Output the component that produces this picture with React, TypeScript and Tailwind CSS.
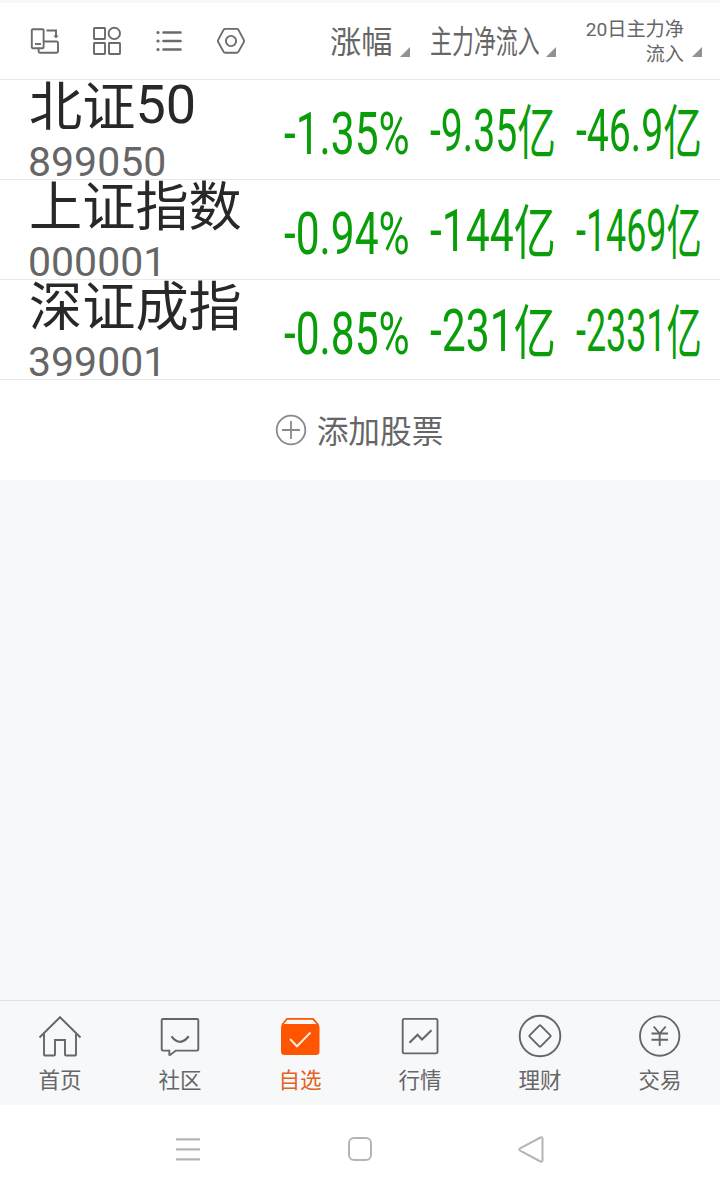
import React, { useLayoutEffect, useRef, useState } from "react";

const stocks = [
  { name: "北证50", code: "899050", change: "-1.35%", inflow: "-9.35亿", inflow20: "-46.9亿" },
  { name: "上证指数", code: "000001", change: "-0.94%", inflow: "-144亿", inflow20: "-1469亿" },
  { name: "深证成指", code: "399001", change: "-0.85%", inflow: "-231亿", inflow20: "-2331亿" },
];

// Chinese glyphs sit a little below the Roboto baseline
const MixedText = ({ text }: { text: string }) => (
  <>
    {text.split(/([\u4e00-\u9fff]+)/).filter(Boolean).map((part, i) =>
      /[\u4e00-\u9fff]/.test(part) ? (
        <span key={i} className="relative top-[0.05em] text-[0.985em]">{part}</span>
      ) : (
        <span key={i}>{part}</span>
      )
    )}
  </>
);

// Squeezes a single line of text horizontally so it fills its box
const FitText = ({ text, className }: { text: string; className: string }) => {
  const box = useRef<HTMLDivElement>(null);
  const label = useRef<HTMLSpanElement>(null);
  const [scale, setScale] = useState(1);

  useLayoutEffect(() => {
    if (box.current && label.current) {
      setScale(box.current.clientWidth / label.current.offsetWidth);
    }
  }, [text]);

  return (
    <div ref={box} className={`shrink-0 ${className}`}>
      <span
        ref={label}
        className="inline-block origin-left whitespace-nowrap"
        style={{ transform: `scaleX(${scale})` }}
      >
        <MixedText text={text} />
      </span>
    </div>
  );
};

const SortMark = () => (
  <svg width="10" height="10" viewBox="0 0 10 10" className="mb-0.5 shrink-0">
    <path d="M10 0v10H0z" fill="#919196" />
  </svg>
);

const Toolbar = () => (
  <div className="flex items-center gap-8 pl-[30px] text-[#6b6b6b]">
    <svg width="30" height="30" viewBox="0 0 30 30" fill="none" stroke="currentColor" strokeWidth="1.9">
      <rect x="1.8" y="3.2" width="11.8" height="19" rx="1" />
      <path d="M5 18h6" />
      <path d="M16.5 4.5H26v7" />
      <path d="M23.3 9.5 26 12.3l2.7-2.8z" fill="currentColor" stroke="none" />
      <path d="M14 15.5h12.6a1.4 1.4 0 0 1 1.4 1.4v8.4a1.4 1.4 0 0 1-1.4 1.4H10a1.4 1.4 0 0 1-1.4-1.4v-3" />
    </svg>
    <svg width="30" height="30" viewBox="0 0 30 30" fill="none" stroke="currentColor" strokeWidth="1.9">
      <rect x="2" y="2" width="11" height="11" rx=".5" />
      <circle cx="22.3" cy="7.4" r="5.7" />
      <rect x="2" y="17" width="11" height="11" rx=".5" />
      <rect x="17" y="17" width="11" height="11" rx=".5" />
    </svg>
    <svg width="30" height="30" viewBox="0 0 30 30" stroke="currentColor" strokeWidth="2.6" strokeLinecap="round">
      <path d="M9.5 6.5h17M9.5 15h17M9.5 23.5h17" />
      <path d="M3.9 6.5h.2M3.9 15h.2M3.9 23.5h.2" strokeWidth="3" />
    </svg>
    <svg width="30" height="30" viewBox="0 0 30 30" fill="none" stroke="currentColor" strokeWidth="1.9">
      <path d="M9.3 2.9h11.4q1.2 0 1.8 1l5.3 10q.6 1.1 0 2.2l-5.3 9.5q-.6 1.2-1.8 1.2H9.3q-1.2 0-1.8-1.2L2.2 16.1q-.6-1.1 0-2.2l5.3-10q.6-1 1.8-1z" />
      <circle cx="15" cy="15" r="5.1" />
    </svg>
  </div>
);

const TableHeader = () => (
  <header className="flex h-[80px] shrink-0 items-center justify-between border-t-[3px] border-b border-t-[#f6f7f8] border-b-[#e9e9e9] bg-white pr-[18px] text-[#666]">
    <Toolbar />
    <div className="flex h-[36px] items-end">
      <div className="flex w-[80px] items-end justify-between">
        <div className="-mb-[1px] text-[31.7px] leading-[38px]">
          <MixedText text="涨幅" />
        </div>
        <SortMark />
      </div>
      <div className="ml-5 flex w-[126px] items-end justify-between">
        <FitText text="主力净流入" className="-mb-px w-[110px] text-[32px] leading-[38px]" />
        <SortMark />
      </div>
      <div className="ml-5 flex w-[126px] items-end justify-end gap-2">
        <div className="-mb-[8px] text-right text-[19.2px] leading-[25px] whitespace-nowrap">
          20日主力净
          <br />
          流入
        </div>
        <SortMark />
      </div>
    </div>
  </header>
);

const StockRow = ({ stock }: { stock: (typeof stocks)[number] }) => (
  <div className="flex h-[100px] shrink-0 items-center border-b border-[#e9e9e9] bg-white pr-[18px] pl-[29px]">
    <div className="w-[255px] shrink-0">
      <div className="h-[65px] text-[54px] leading-[50px] whitespace-nowrap text-[#282828]">
        <MixedText text={stock.name} />
      </div>
      <div className="-ml-px h-[34px] text-[41px] leading-[35px] text-[#666]">{stock.code}</div>
    </div>
    <div className="flex items-center gap-5 text-[60px] leading-[70px] text-[#0a9d0a]">
      <FitText text={stock.change} className="w-[126px] pt-[8px]" />
      <FitText text={stock.inflow} className="w-[126px] pt-[3px]" />
      <FitText text={stock.inflow20} className="w-[126px] pt-[3px]" />
    </div>
  </div>
);

const AddStock = () => (
  <div className="flex h-[100px] shrink-0 items-center justify-center gap-[10px] bg-white pr-[2px] text-[#666]">
    <svg width="32" height="32" viewBox="0 0 32 32" fill="none" stroke="#8a8a8e" strokeWidth="1.8">
      <circle cx="16" cy="16" r="14.3" />
      <path d="M16 7v18M7 16h18" />
    </svg>
    <span className="pt-[6px] text-[31.7px] leading-[40px]">添加股票</span>
  </div>
);

const tabs = [
  {
    label: "首页",
    icon: (
      <>
        <path d="M3.5 23.5 24 3.2l20.5 20.3" />
        <path d="M8 20v20.5q0 1 1 1h9q1 0 1-1V26h10v14.5q0 1 1 1h9q1 0 1-1V20" />
      </>
    ),
  },
  {
    label: "社区",
    icon: (
      <>
        <path d="M7 5h34q1.3 0 1.3 1.3v29q0 1.3-1.3 1.3H20l-6 4.3q-.6.4-.7-.3v-4H7q-1.3 0-1.3-1.3v-29Q5.7 5 7 5z" />
        <path d="M15.5 22.3q8.5 11 17.2 0" strokeWidth="2.2" />
      </>
    ),
  },
  {
    label: "自选",
    active: true,
    icon: (
      <>
        <path d="M6 11 11 4.8h26L42.5 11" strokeWidth="1.8" />
        <rect x="5" y="10" width="38.5" height="31" rx="3.5" fill="currentColor" stroke="none" />
        <path d="m14 25 7 7.3 13.5-13.8" stroke="#ffe9dc" strokeWidth="2" />
      </>
    ),
  },
  {
    label: "行情",
    icon: (
      <>
        <rect x="6.7" y="4.9" width="34.8" height="34.5" rx="1.5" />
        <path d="m13.5 28.7 8-8 4.5 4.8 9.5-9.3" strokeWidth="2.1" />
      </>
    ),
  },
  {
    label: "理财",
    icon: (
      <>
        <circle cx="24" cy="22" r="20.3" />
        <path d="M23.3 11.6q.7-.7 1.4 0l9.7 9.7q.7.7 0 1.4l-9.7 9.7q-.7.7-1.4 0l-9.7-9.7q-.7-.7 0-1.4z" />
      </>
    ),
  },
  {
    label: "交易",
    icon: (
      <>
        <circle cx="23.7" cy="22" r="19.7" />
        <path d="m17.7 12.5 6 7 6-7M15.5 19.5H32M15.5 25.7H32M23.7 19.5V32" />
      </>
    ),
  },
];

const TabBar = () => (
  <nav className="grid h-[105px] shrink-0 grid-cols-6 border-t border-[#e2e3e5]">
    {tabs.map((tab) => (
      <div
        key={tab.label}
        className={`flex flex-col items-center pt-[13px] ${tab.active ? "text-[#ff5500]" : "text-[#666]"}`}
      >
        <svg width="48" height="48" viewBox="0 0 48 48" fill="none" stroke="currentColor" strokeWidth="1.9">
          {tab.icon}
        </svg>
        <span className={`mt-[5px] text-[21.5px] leading-[28px] ${tab.active ? "text-[#e2621f]" : ""}`}>{tab.label}</span>
      </div>
    ))}
  </nav>
);

const SystemNav = () => (
  <div className="flex h-[88px] shrink-0 items-center justify-between bg-white px-[172px] text-[#b5b5b5]">
    <svg width="32" height="32" viewBox="0 0 32 32" stroke="currentColor" strokeWidth="2.3">
      <path d="M4 6.3h24M4 16.3h24M4 26.3h24" />
    </svg>
    <svg width="32" height="32" viewBox="0 0 32 32" fill="none" stroke="currentColor" strokeWidth="2">
      <rect x="5" y="5" width="22" height="22" rx="5" />
    </svg>
    <svg width="32" height="32" viewBox="0 0 32 32" fill="none" stroke="currentColor" strokeWidth="2" strokeLinejoin="round">
      <path d="M24.5 4.5q2-.8 2 1.500v21q0 2.300-2 1.500L4.500 17.800q-2.300-1.300 0-2.700z" />
    </svg>
  </div>
);

const App = () => {
  return (
    <div className="flex h-[1193px] w-[720px] flex-col overflow-hidden bg-[#f7f8fa] font-['Roboto','Noto_Sans_CJK_SC',sans-serif]">
      <TableHeader />
      {stocks.map((stock) => (
        <StockRow key={stock.code} stock={stock} />
      ))}
      <AddStock />
      <main className="flex-1" />
      <TabBar />
      <SystemNav />
    </div>
  );
};

export default App;
